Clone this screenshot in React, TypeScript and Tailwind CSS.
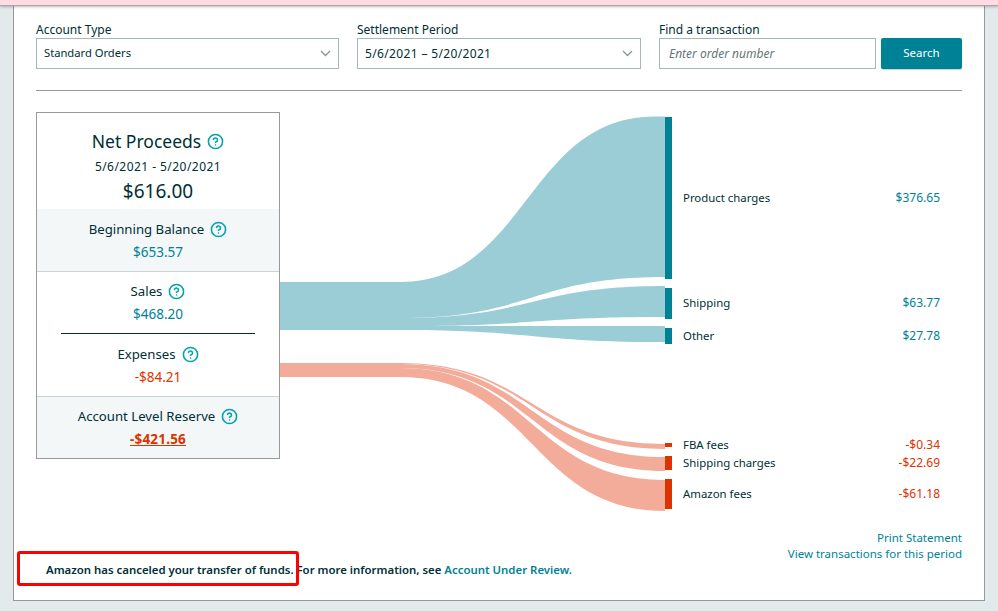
import { CircleHelp } from "lucide-react";

const flows = [
  { label: "Product charges", value: "$376.65", gap: "mt-[78px]", tone: "text-[#008296]" },
  { label: "Shipping", value: "$63.77", gap: "mt-[89px]", tone: "text-[#008296]" },
  { label: "Other", value: "$27.78", gap: "mt-[17px]", tone: "text-[#008296]" },
  { label: "FBA fees", value: "-$0.34", gap: "mt-[93px]", tone: "text-[#dd3300]" },
  { label: "Shipping charges", value: "-$22.69", gap: "mt-[2px]", tone: "text-[#dd3300]" },
  { label: "Amazon fees", value: "-$61.18", gap: "mt-[15px]", tone: "text-[#dd3300]" },
];

function Help() {
  return <CircleHelp size={17} strokeWidth={2.2} className="ml-[6px] shrink-0 text-[#00a1b0]" />;
}

function Chevron() {
  return (
    <svg width="11" height="7" viewBox="0 0 11 7" fill="none" stroke="#879596" strokeWidth="1.3">
      <path d="M1 1l4.500 4.500L10 1" />
    </svg>
  );
}

function Field({ label, value, width, text }: { label: string; value: string; width: string; text: string }) {
  return (
    <div className={width}>
      <div className="h-4 text-[12px] leading-4 text-[#002f36]">{label}</div>
      <div className="flex h-[31px] items-center justify-between border border-[#a6b7b9] pl-[7px] pr-[7px] text-[#002f36]">
        <span className={text}>{value}</span>
        <Chevron />
      </div>
    </div>
  );
}

function Stat({ label, value, tone, top }: { label: string; value: string; tone: string; top: string }) {
  return (
    <div className={top}>
      <div className="flex h-5 items-center justify-center text-[13.200px] leading-5 text-[#002f36]">
        {label}
        <Help />
      </div>
      <div className={`mt-1 h-[18px] text-center text-[13.500px] leading-[18px] ${tone}`}>{value}</div>
    </div>
  );
}

function Chart() {
  return (
    <svg width="392" height="403" viewBox="280 112 392 403" className="shrink-0">
      <g fill="#9bcdd6">
        <path d="M280 282L400 282C527 282 527 116.500 655 116.500L665 116.500L665 277C532 277 532 318 400 318L280 318Z" />
        <path d="M280 318L400 318C532 318 532 286 665 286L665 317C532 317 532 326 420 326L280 326Z" />
        <path d="M280 326L420 326C532 326 532 326 665 326L665 342C532 342 532 330 400 330L280 330Z" />
      </g>
      <g fill="#f3ab9a">
        <path d="M280 363L400 363C532 363 532 444 665 444L665 449C532 449 532 364 400 364L280 364Z" />
        <path d="M280 364L400 364C532 364 532 457 665 457L665 471C532 471 532 368 400 368L280 368Z" />
        <path d="M280 368L400 368C532 368 532 480 665 480L665 511C532 511 532 377 400 377L280 377Z" />
      </g>
      <g fill="#008296">
        <rect x="665" y="117" width="7" height="162" />
        <rect x="665" y="288" width="7" height="31" />
        <rect x="665" y="328" width="7" height="16" />
      </g>
      <g fill="#dd3300">
        <rect x="665" y="443" width="7" height="4" />
        <rect x="665" y="456" width="7" height="14" />
        <rect x="665" y="479" width="7" height="30" />
      </g>
    </svg>
  );
}

export default function App() {
  return (
    <div className="flex h-[611px] w-[998px] flex-col overflow-hidden bg-[#e3eaeb] font-['Noto_Sans',sans-serif]">
      <div className="relative z-10 h-[5px] shrink-0 bg-[#fddde3] shadow-[0_1px_0_#b5a0a5,0_2px_3px_rgba(0,0,0,0.25)]" />
      <div className="relative mx-[13px] h-[596px] border border-t-0 border-[#999999] bg-white px-[22px] pt-[17px]">
        <div className="flex">
          <Field label="Account Type" value="Standard Orders" width="w-[303px]" text="text-[11.200px]" />
          <div className="ml-[18px]">
            <Field label="Settlement Period" value="5/6/2021 – 5/20/2021" width="w-[284px]" text="text-[12px] tracking-[0.35px]" />
          </div>
          <div className="ml-[18px] w-[217px]">
            <div className="h-4 text-[12px] leading-4 text-[#002f36]">Find a transaction</div>
            <input
              placeholder="Enter order number"
              className="h-[31px] w-full border border-[#a6b7b9] px-[9px] text-[12px] italic text-[#002f36] outline-none placeholder:text-[#667575]"
            />
          </div>
          <button className="ml-[5px] mt-4 h-[31px] w-[81px] rounded-[2px] bg-[#008296] pb-[2px] text-[11.500px] text-white shadow-[0_1px_1px_rgba(0,0,0,0.2)]">
            Search
          </button>
        </div>

        <div className="mt-[21px] h-px bg-[#999999]" />

        <div className="mt-[21px] flex h-[418px] items-start">
          <div className="h-[347px] w-[244px] shrink-0 border border-[#999999]">
            <div className="h-[96px] pt-4">
              <div className="flex h-6 items-center justify-center text-[17.500px] leading-6 text-[#002f36]">
                Net Proceeds
                <Help />
              </div>
              <div className="mt-[5px] h-[18px] text-center text-[12px] leading-[18px] tracking-[0.45px] text-[#002f36]">5/6/2021 - 5/20/2021</div>
              <div className="mt-[2px] h-[26px] text-center text-[19px] leading-[26px] text-[#002f36]">$616.00</div>
            </div>
            <div className="h-[63px] border-b border-[#ccd5d6] bg-[#f3f7f8]">
              <Stat label="Beginning Balance" value="$653.57" tone="text-[#008296]" top="pt-[10px]" />
            </div>
            <div className="h-[125px] border-b border-[#ccd5d6]">
              <Stat label="Sales" value="$468.20" tone="text-[#008296]" top="pt-[9px]" />
              <div className="mx-6 mt-[10px] h-px bg-[#002f36]" />
              <Stat label="Expenses" value="-$84.21" tone="text-[#dd3300]" top="pt-[10px]" />
            </div>
            <div className="h-[61px] bg-[#f3f7f8] pt-[9px]">
              <div className="flex h-5 items-center justify-center text-[13.200px] leading-5 text-[#002f36]">
                Account Level Reserve
                <Help />
              </div>
              <div className="mt-1 h-[18px] text-center text-[13.500px] font-bold leading-[18px] tracking-[0.2px] text-[#dd3300] underline">-$421.56</div>
            </div>
          </div>

          <Chart />

          <div className="ml-[11px] w-[257px]">
            {flows.map((flow) => (
              <div key={flow.label} className={`flex h-4 justify-between leading-4 ${flow.gap}`}>
                <span className="text-[11.400px] text-[#002f36]">{flow.label}</span>
                <span className={`text-[12px] ${flow.tone}`}>{flow.value}</span>
              </div>
            ))}
          </div>
        </div>

        <div className="text-right text-[11.500px] leading-4 text-[#008296]">
          <div>Print Statement</div>
          <div>View transactions for this period</div>
        </div>

        <p className="ml-[10px] text-[11.400px] font-semibold leading-4 text-[#002f36]">
          Amazon has canceled your transfer of funds. For more information, see <span className="text-[#008296]">Account Under Review.</span>
        </p>

        <div className="absolute left-[3px] top-[546px] h-[35px] w-[282px] rounded-[3px] border-[3px] border-[#ff0000]" />
      </div>
    </div>
  );
}
